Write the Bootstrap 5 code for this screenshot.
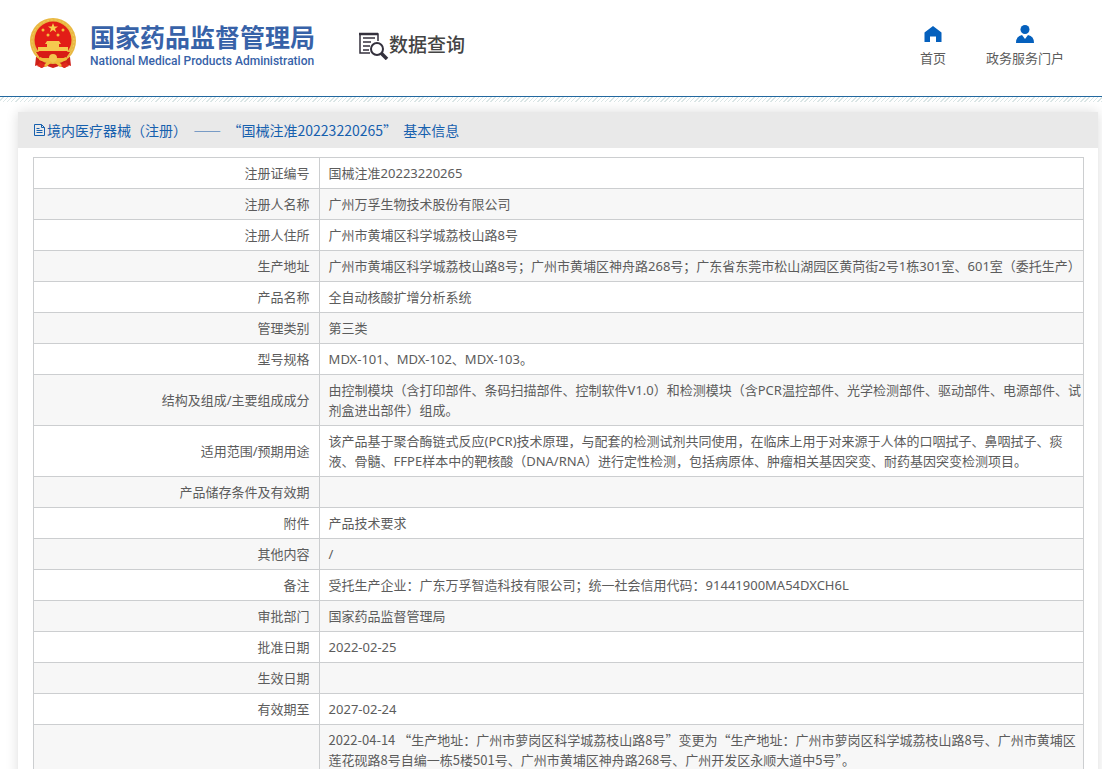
<!DOCTYPE html>
<html lang="zh-CN">
<head>
<meta charset="utf-8">
<meta name="viewport" content="width=device-width, initial-scale=1">
<title>国家药品监督管理局 数据查询</title>
<link href="https://cdn.jsdelivr.net/npm/bootstrap@5.3.0/dist/css/bootstrap.min.css" rel="stylesheet">
<style>
  body { font: 13px/20px "Noto Sans", "Noto Sans CJK SC", sans-serif; color: #5c5c5c; background: #fff; }
  .page { height: 100vh; }
  .site-header { height: 97px; padding: 16px 38px 0 28px; border-bottom: 1px solid #22689f; }
  .hatch { height: 5px; background: repeating-linear-gradient(135deg, #fff 0 2px, #dbe6e6 2px 3px); }
  .brand { color: #3762a8; }
  .brand:hover { color: #3762a8; }
  .brand-zh { font: 700 25px/32px "Noto Sans CJK SC", sans-serif; }
  .brand-en { font: 500 12px/18px Roboto, sans-serif; }
  .query { margin-left: 44px; padding-top: 14px; }
  .query-title { font: 500 19px/28px "Noto Sans CJK SC", sans-serif; color: #444; margin: 0; }
  .site-nav { gap: 40px; padding-top: 8px; }
  .site-nav a { color: #5c5c5c; }
  .site-nav svg { fill: #0560bd; }
  .info { margin: 10px 4px 0 18px; box-shadow: 0 0 12px rgba(0,0,0,.14); }
  .info-title { height: 36px; padding: 0 15px; background: #e9e9e9; color: #1660ae; }
  .info-title h1 { font: 14px/20px "Noto Sans CJK SC", sans-serif; margin: 0; white-space: pre; }
  .info-body { padding: 9px 14px 0 15px; }
  .detail { margin: 0; color: #5c5c5c; border: 1px solid #ccced0; }
  .detail > tbody > tr > * { color: #5c5c5c; border: 1px solid #ccced0; padding: 5px 2px 5px 9px; font-weight: 400; vertical-align: middle; background: #fff; box-shadow: none; height: 31px; }
  .detail > tbody > tr > th { width: 27.2%; text-align: right; padding: 5px 9px; }
  .detail > tbody > tr:nth-child(even) > * { background: #f7f7f7; }
  .detail > tbody > tr:last-child > * { height: 220px; vertical-align: top; font-family: "Noto Sans CJK SC", sans-serif; }
</style>
</head>
<body>
<div class="page overflow-hidden">
  <header class="site-header d-flex align-items-start">
    <a class="brand d-flex text-decoration-none" href="#">
      <svg width="50" height="54" viewBox="0 0 50 54" aria-hidden="true">
        <path d="M8 41l34 0 1 9q-4-2-6 2l-6-2-6 2-6-2-6 2q-2-4-6-2z" fill="#cf2018"/>
        <circle cx="25" cy="25" r="23" fill="#e9b842"/>
        <circle cx="25" cy="25" r="21" fill="none" stroke="#f3cb62" stroke-width="1" stroke-dasharray="2 2"/>
        <circle cx="25" cy="24" r="18.500" fill="#e21d17"/>
        <path d="M25 7l1.300 3.500h3.700l-3 2.200 1.200 3.600-3.200-2.200-3.200 2.200 1.200-3.600-3-2.200h3.700z" fill="#f8cf4c"/>
        <g fill="#f4bf3c"><circle cx="15" cy="14" r="1.500"/><circle cx="20" cy="19" r="1.500"/><circle cx="30" cy="19" r="1.500"/><circle cx="35" cy="14" r="1.500"/></g>
        <path d="M19 25h12l2 3h-2v3h9v4H10v-4h9v-3h-2z" fill="#f5c94f"/>
        <path d="M8 36h34l-4 6H12z" fill="#d71c16"/>
        <path d="M12 41q7 4 13-1 6 5 13 1l1 3q-5 2-9 1l5 5-3 1-7-6-7 6-3-1 5-5q-4 1-9-1z" fill="#f1bd3c"/>
        <circle cx="25" cy="42" r="4" fill="#f3c64e"/>
        <path d="M12 46l5 3-3 3-5-2zM38 46l-5 3 3 3 5-2z" fill="#e02a1d"/>
      </svg>
      <span class="d-flex flex-column text-nowrap ms-1 ps-2 pt-1">
        <span class="brand-zh">国家药品监督管理局</span>
        <span class="brand-en">National Medical Products Administration</span>
      </span>
    </a>
    <div class="query d-flex text-nowrap">
      <svg class="flex-shrink-0" width="30" height="30" viewBox="0 0 30 30" fill="none" stroke="#34313d" stroke-width="2" aria-hidden="true">
        <path d="M11 23H1V4h18v7" stroke-width="1.500"/><path d="M0 4h19" stroke-width="2.500"/>
        <path d="M4 8h12M4 12h8M4 16h7M4 20h6" stroke-width="1.500"/>
        <circle cx="18" cy="19" r="6"/><path d="M22 23l6 6" stroke-width="3.500"/>
      </svg>
      <h2 class="query-title">数据查询</h2>
    </div>
    <nav class="site-nav d-flex ms-auto text-nowrap">
      <a class="d-flex flex-column align-items-center text-decoration-none" href="#">
        <svg class="mb-1" width="20" height="20" viewBox="0 0 20 20" aria-hidden="true"><path d="M10 2l8.500 6.500V18H13v-5.500H7V18H1.500V8.500z"/></svg>
        首页
      </a>
      <a class="d-flex flex-column align-items-center text-decoration-none" href="#">
        <svg class="mb-1" width="20" height="20" viewBox="0 0 20 20" aria-hidden="true"><circle cx="10" cy="5.500" r="4.500"/><path d="M1 19q0-7 6-8l3 4 3-4q6 1 6 8z"/></svg>
        政务服务门户
      </a>
    </nav>
  </header>
  <div class="hatch"></div>
  <main class="info">
    <div class="info-title d-flex align-items-center">
      <svg width="14" height="14" viewBox="0 0 14 14" fill="none" stroke="#1660ae" aria-hidden="true"><path d="M1.500 1.500h7l3 3v8h-10zM8.500 1.500v3h3M3.500 5.500h3M3.500 7.500h6M3.500 9.500h6"/></svg>
      <h1>境内医疗器械（注册）  ——  “国械注准20223220265”  基本信息</h1>
    </div>
    <div class="info-body">
      <table class="table detail">
        <tbody>
          <tr><th scope="row">注册证编号</th><td>国械注准20223220265</td></tr>
          <tr><th scope="row">注册人名称</th><td>广州万孚生物技术股份有限公司</td></tr>
          <tr><th scope="row">注册人住所</th><td>广州市黄埔区科学城荔枝山路8号</td></tr>
          <tr><th scope="row">生产地址</th><td>广州市黄埔区科学城荔枝山路8号；广州市黄埔区神舟路268号；广东省东莞市松山湖园区黄苘街2号1栋301室、601室（委托生产）</td></tr>
          <tr><th scope="row">产品名称</th><td>全自动核酸扩增分析系统</td></tr>
          <tr><th scope="row">管理类别</th><td>第三类</td></tr>
          <tr><th scope="row">型号规格</th><td>MDX-101、MDX-102、MDX-103。</td></tr>
          <tr><th scope="row">结构及组成/主要组成成分</th><td>由控制模块（含打印部件、条码扫描部件、控制软件V1.0）和检测模块（含PCR温控部件、光学检测部件、驱动部件、电源部件、试剂盒进出部件）组成。</td></tr>
          <tr><th scope="row">适用范围/预期用途</th><td>该产品基于聚合酶链式反应(PCR)技术原理，与配套的检测试剂共同使用，在临床上用于对来源于人体的口咽拭子、鼻咽拭子、痰液、骨髓、FFPE样本中的靶核酸（DNA/RNA）进行定性检测，包括病原体、肿瘤相关基因突变、耐药基因突变检测项目。</td></tr>
          <tr><th scope="row">产品储存条件及有效期</th><td></td></tr>
          <tr><th scope="row">附件</th><td>产品技术要求</td></tr>
          <tr><th scope="row">其他内容</th><td>/</td></tr>
          <tr><th scope="row">备注</th><td>受托生产企业：广东万孚智造科技有限公司；统一社会信用代码：91441900MA54DXCH6L</td></tr>
          <tr><th scope="row">审批部门</th><td>国家药品监督管理局</td></tr>
          <tr><th scope="row">批准日期</th><td>2022-02-25</td></tr>
          <tr><th scope="row">生效日期</th><td></td></tr>
          <tr><th scope="row">有效期至</th><td>2027-02-24</td></tr>
          <tr><th scope="row"></th><td>2022-04-14 “生产地址：广州市萝岗区科学城荔枝山路8号”变更为“生产地址：广州市萝岗区科学城荔枝山路8号、广州市黄埔区莲花砚路8号自编一栋5楼501号、广州市黄埔区神舟路268号、广州开发区永顺大道中5号”。</td></tr>
        </tbody>
      </table>
    </div>
  </main>
</div>
<script src="https://cdn.jsdelivr.net/npm/bootstrap@5.3.0/dist/js/bootstrap.bundle.min.js"></script>
</body>
</html>
